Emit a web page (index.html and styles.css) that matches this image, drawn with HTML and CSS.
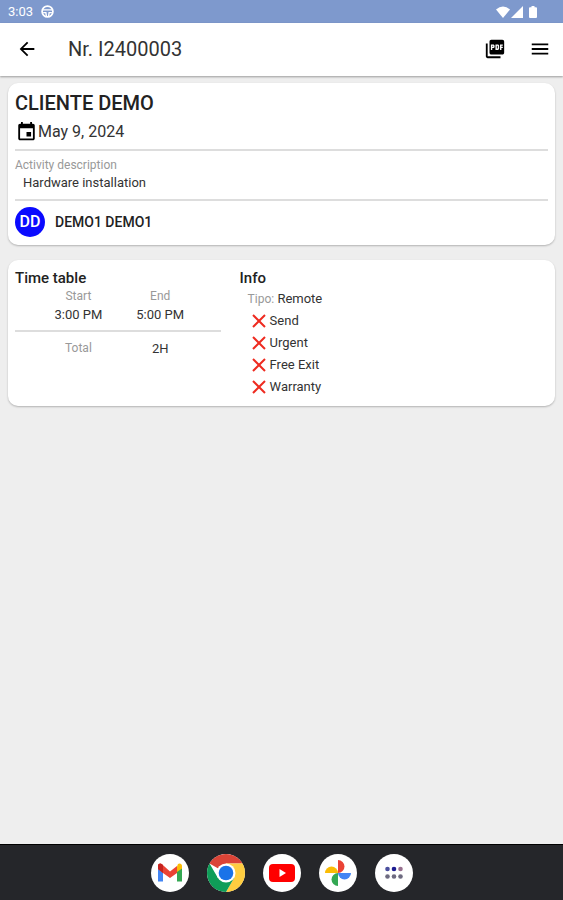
FILE: index.html
```html
<!DOCTYPE html>
<html lang="en">
<head>
    <meta charset="UTF-8">
    <meta name="viewport" content="width=device-width, initial-scale=1">
    <title>Nr. I2400003</title>
    <link rel="stylesheet" href="styles.css">
</head>
<body>
    <!-- status bar -->
    <div class="status">
        <span>3:03</span>
        <svg class="status-app" width="13" height="13" viewBox="0 0 12 12">
            <circle cx="6" cy="6" r="5" fill="none" stroke="#fff" stroke-width="1.6"/>
            <path d="M1.5 4.5h9M2 7h2.5l.5 3.5M10 7H7.500l-.5 3.500" fill="none" stroke="#fff" stroke-width="1.3"/>
        </svg>
        <div class="status-right">
            <svg width="14" height="12" viewBox="0 0 14 12"><path d="M0 3.500Q7-2.500 14 3.500L7 12z" fill="#fff"/></svg>
            <svg width="12" height="12" viewBox="0 0 12 12"><path d="M12 0v12H0z" fill="#fff"/></svg>
            <svg class="battery" width="8" height="12" viewBox="0 0 8 12"><path d="M2.500 0h3v1.200H7a1 1 0 0 1 1 1V11a1 1 0 0 1-1 1H1a1 1 0 0 1-1-1V2.200a1 1 0 0 1 1-1h1.500z" fill="#fff"/></svg>
        </div>
    </div>
    <!-- toolbar -->
    <header class="toolbar">
        <button class="icon-btn" type="button" aria-label="Back">
            <svg width="22" height="22" viewBox="0 0 24 24"><path d="M20 11H7.830l5.590-5.590L12 4l-8 8 8 8 1.410-1.410L7.830 13H20z"/></svg>
        </button>
        <h1>Nr. I2400003</h1>
        <button class="icon-btn" type="button" aria-label="Open PDF">
            <svg width="22" height="22" viewBox="0 0 24 24"><path d="M20 2H8c-1.100 0-2 .9-2 2v12c0 1.100.9 2 2 2h12c1.100 0 2-.9 2-2V4c0-1.100-.9-2-2-2zm-8.500 7.500c0 .830-.670 1.500-1.500 1.500H9v2H7.500V7H10c.830 0 1.500.670 1.500 1.500v1zm5 2c0 .830-.670 1.500-1.500 1.500h-2.500V7H15c.830 0 1.500.670 1.500 1.500v3zm4-3H19v1h1.500V11H19v2h-1.500V7h3v1.500zM9 9.500h1v-1H9v1zM4 6H2v14c0 1.100.9 2 2 2h14v-2H4V6zm10 5.500h1v-3h-1v3z"/></svg>
        </button>
        <button class="icon-btn" type="button" aria-label="Menu">
            <svg width="22" height="22" viewBox="0 0 24 24"><path d="M3 18h18v-2H3v2zm0-5h18v-2H3v2zm0-7v2h18V6H3z"/></svg>
        </button>
    </header>
    <main>
        <section class="card">
            <h2 class="client">CLIENTE DEMO</h2>
            <div class="date">
                <svg width="23" height="22" viewBox="0 0 24 24"><path d="M17 12h-5v5h5v-5zM16 1v2H8V1H6v2H5c-1.110 0-1.990.9-1.990 2L3 19c0 1.100.890 2 2 2h14c1.100 0 2-.9 2-2V5c0-1.100-.9-2-2-2h-1V1h-2zm3 18H5V8h14v11z"/></svg>
                <span>May 9, 2024</span>
            </div>
            <div class="activity">
                <h3>Activity description</h3>
                <p>Hardware installation</p>
            </div>
            <div class="person">
                <span class="avatar">DD</span>
                <span>DEMO1 DEMO1</span>
            </div>
        </section>
        <section class="card columns">
            <div class="times">
                <h2>Time table</h2>
                <table>
                    <thead>
                        <tr><th>Start</th><th>End</th></tr>
                    </thead>
                    <tbody>
                        <tr><td>3:00 PM</td><td>5:00 PM</td></tr>
                    </tbody>
                    <tfoot>
                        <tr><th>Total</th><td>2H</td></tr>
                    </tfoot>
                </table>
            </div>
            <div class="info">
                <h2>Info</h2>
                <p class="type"><span>Tipo:</span> Remote</p>
                <ul>
                    <li><svg width="14" height="14" viewBox="0 0 14 14"><path d="M1 1l12 12M13 1L1 13"/></svg>Send</li>
                    <li><svg width="14" height="14" viewBox="0 0 14 14"><path d="M1 1l12 12M13 1L1 13"/></svg>Urgent</li>
                    <li><svg width="14" height="14" viewBox="0 0 14 14"><path d="M1 1l12 12M13 1L1 13"/></svg>Free Exit</li>
                    <li><svg width="14" height="14" viewBox="0 0 14 14"><path d="M1 1l12 12M13 1L1 13"/></svg>Warranty</li>
                </ul>
            </div>
        </section>
    </main>
    <!-- app dock -->
    <nav class="dock">
        <button type="button" aria-label="Gmail">
            <svg viewBox="0 0 38 38">
                <path d="M7 13v14.500h5V17z" fill="#4285f4"/>
                <path d="M31 13v14.500h-5V17z" fill="#34a853"/>
                <path d="M26 12.500V18l5-3.500V12c0-2.500-2.500-3.300-4-2z" fill="#fbbc04"/>
                <path d="M7 12v3l5 4 7 5 7-5v-7l-7 5.500L11 10.200C9.300 9 7 9.700 7 12z" fill="#ea4335"/>
                <path d="M7 12v3l5 4v-8l-1-.8C9.300 9 7 9.700 7 12z" fill="#c5221f"/>
            </svg>
        </button>
        <button type="button" aria-label="Chrome">
            <svg viewBox="0 0 38 38">
                <path d="M19 19L2.550 9.500A19 19 0 0 1 35.450 9.500H19z" fill="#db4437"/>
                <path d="M35.450 9.500A19 19 0 0 1 19 38L27.200 23.800 19 9.500z" fill="#ffcd40"/>
                <path d="M2.550 9.500A19 19 0 0 0 19 38L27.200 23.800H10.800z" fill="#0f9d58"/>
                <circle cx="19" cy="19" r="9.500" fill="#fff"/>
                <circle cx="19" cy="19" r="7.300" fill="#1a73e8"/>
            </svg>
        </button>
        <button type="button" aria-label="YouTube">
            <svg viewBox="0 0 38 38">
                <rect x="6" y="10" width="26" height="18" rx="4" fill="#f00"/>
                <path d="M16.500 15v8l6.500-4z" fill="#fff"/>
            </svg>
        </button>
        <button type="button" aria-label="Photos">
            <svg viewBox="0 0 38 38">
                <path d="M19 6a6.500 6.500 0 0 1 0 13z" fill="#ea4335"/>
                <path d="M32 19a6.500 6.500 0 0 1-13 0z" fill="#4285f4"/>
                <path d="M19 32a6.500 6.500 0 0 1 0-13z" fill="#34a853"/>
                <path d="M6 19a6.500 6.500 0 0 1 13 0z" fill="#fbbc04"/>
            </svg>
        </button>
        <button type="button" aria-label="All apps">
            <svg viewBox="0 0 38 38">
                <g fill="#6d6a80">
                    <circle cx="12.500" cy="15" r="2.300" fill="#4b4f9e"/>
                    <circle cx="19" cy="15" r="2.300" fill="#1d1d91"/>
                    <circle cx="25.500" cy="15" r="2.300" fill="#98708f"/>
                    <circle cx="12.500" cy="22.500" r="2.300"/>
                    <circle cx="19" cy="22.500" r="2.300"/>
                    <circle cx="25.500" cy="22.500" r="2.300"/>
                </g>
            </svg>
        </button>
    </nav>
</body>
</html>
```
FILE: styles.css
```css
*{
    margin: 0;
    padding: 0;
    box-sizing: border-box;
}
body
{
    min-height: 100vh;
    display: flex;
    flex-direction: column;
    background-color: #eeeeee;
    color: #333333;
    font-family: Roboto, sans-serif;
    font-size: 13px;
    line-height: 16px;
}
button
{
    border: none;
    background: none;
    cursor: pointer;
}
svg
{
    display: block;
    flex: none;
}
.status
{
    display: flex;
    align-items: center;
    gap: 8px;
    height: 23px;
    padding: 0 26px 0 8px;
    background-color: #7e99cd;
    color: #ffffff;
}
.status-right
{
    display: flex;
    gap: 1px;
    margin-left: auto;
}
.battery
{
    margin-left: 5px;
}
.toolbar
{
    display: flex;
    align-items: center;
    height: 53px;
    padding: 0 12px 2px 16px;
    background-color: #ffffff;
    box-shadow: 0 1px 2px rgba(0,0,0,0.35);
}
.toolbar h1
{
    flex: 1;
    margin-left: 30px;
    font-size: 20px;
    line-height: 24px;
    font-weight: 400;
}
.icon-btn + .icon-btn
{
    margin-left: 23px;
}
main
{
    flex: 1;
    display: flex;
    flex-direction: column;
    gap: 15px;
    padding: 7px 8px;
}
.card
{
    padding: 8px 7px;
    border-radius: 10px;
    background-color: #ffffff;
    box-shadow: 0 1px 2px rgba(0,0,0,0.25);
}
.card h2
{
    color: #222222;
    font-size: 15px;
    line-height: 20px;
    font-weight: 500;
}
.card .client
{
    font-size: 20px;
    line-height: 24px;
}
.date
{
    display: flex;
    align-items: center;
    height: 36px;
    border-bottom: 2px solid #dddddd;
    font-size: 16px;
}
.activity
{
    padding: 6px 0 7px;
    border-bottom: 2px solid #dddddd;
}
.activity h3
{
    color: #999999;
    font-size: 12px;
    line-height: 17px;
    font-weight: 400;
}
.activity p
{
    padding-left: 8px;
    line-height: 18px;
}
.person
{
    display: flex;
    align-items: center;
    gap: 10px;
    padding-top: 6px;
    color: #222222;
    font-size: 14px;
    font-weight: 500;
}
.avatar
{
    width: 30px;
    height: 30px;
    border-radius: 50%;
    background-color: #0a0aff;
    color: #ffffff;
    font-size: 16px;
    line-height: 30px;
    text-align: center;
}
.columns
{
    display: grid;
    grid-template-columns: 2fr 3fr;
    gap: 19px;
}
.times table
{
    width: 100%;
    border-collapse: collapse;
    table-layout: fixed;
}
.times th, .times td
{
    text-align: center;
}
.times th:first-child, .times td:first-child
{
    padding-left: 24px;
}
.times th:last-child, .times td:last-child
{
    padding-right: 18px;
}
.times th
{
    color: #999999;
    font-size: 12px;
    line-height: 17px;
    font-weight: 400;
}
.times tbody td
{
    padding-bottom: 5px;
    line-height: 20px;
}
.times tfoot
{
    border-top: 2px solid #dddddd;
}
.times tfoot th, .times tfoot td
{
    padding-top: 8px;
}
.type
{
    padding-left: 8px;
    line-height: 22px;
}
.type span
{
    color: #999999;
    font-size: 12px;
}
.info ul
{
    padding-left: 12px;
    list-style: none;
}
.info li
{
    display: flex;
    align-items: center;
    gap: 4px;
    height: 22px;
}
.info li svg
{
    fill: none;
    stroke: #ee2b20;
    stroke-width: 2;
}
.dock
{
    display: flex;
    justify-content: center;
    align-items: center;
    gap: 18px;
    height: 56px;
    background-color: #25262a;
    border-top: 1px solid #000000;
}
.dock button
{
    width: 38px;
    height: 38px;
    border-radius: 50%;
    background-color: #ffffff;
}
```
